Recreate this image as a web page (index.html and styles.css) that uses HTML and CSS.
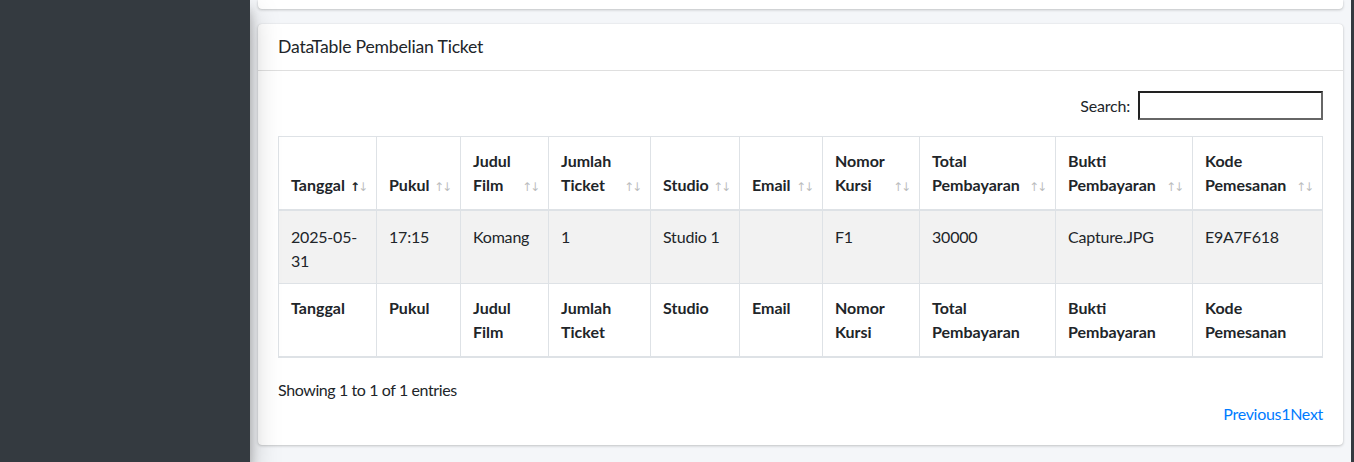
FILE: index.html
```html
<!DOCTYPE html>
<html lang="id">
<head>
<meta charset="utf-8">
<title>DataTable Pembelian Ticket</title>
<link rel="stylesheet" href="styles.css">
</head>
<body>
<div class="layout">
  <aside class="sidebar"></aside>
  <main class="content">
    <div class="card card-prev"></div>
    <div class="card">
      <div class="card-header"><h3 class="card-title">DataTable Pembelian Ticket</h3></div>
      <div class="card-body">
        <div class="dt-top">
          <label class="dt-search">Search:<input type="search" class="dt-input"></label>
        </div>
        <table class="table">
          <colgroup>
            <col class="w1"><col class="w2"><col class="w3"><col class="w4"><col class="w5">
            <col class="w6"><col class="w7"><col class="w8"><col class="w9"><col class="w10">
          </colgroup>
          <thead>
            <tr>
              <th class="sort asc">Tanggal</th>
              <th class="sort">Pukul</th>
              <th class="sort">Judul Film</th>
              <th class="sort">Jumlah Ticket</th>
              <th class="sort">Studio</th>
              <th class="sort">Email</th>
              <th class="sort">Nomor Kursi</th>
              <th class="sort">Total Pembayaran</th>
              <th class="sort">Bukti Pembayaran</th>
              <th class="sort">Kode Pemesanan</th>
            </tr>
          </thead>
          <tbody>
            <tr class="odd">
              <td>2025-05-31</td>
              <td>17:15</td>
              <td>Komang</td>
              <td>1</td>
              <td>Studio 1</td>
              <td></td>
              <td>F1</td>
              <td>30000</td>
              <td>Capture.JPG</td>
              <td>E9A7F618</td>
            </tr>
          </tbody>
          <tfoot>
            <tr>
              <th>Tanggal</th>
              <th>Pukul</th>
              <th>Judul Film</th>
              <th>Jumlah Ticket</th>
              <th>Studio</th>
              <th>Email</th>
              <th>Nomor Kursi</th>
              <th>Total Pembayaran</th>
              <th>Bukti Pembayaran</th>
              <th>Kode Pemesanan</th>
            </tr>
          </tfoot>
        </table>
        <div class="dt-info">Showing 1 to 1 of 1 entries</div>
        <div class="dt-paging"><a href="#" class="pg">Previous</a><a href="#" class="pg">1</a><a href="#" class="pg">Next</a></div>
      </div>
    </div>
  </main>
  <div class="edge"></div>
</div>
</body>
</html>
```
FILE: styles.css
```css
* { box-sizing: border-box; }
html, body { margin: 0; padding: 0; height: 100%; }
body {
  font-family: Lato, "Open Sans", sans-serif;
  font-size: 16px;
  line-height: 24px;
  color: #212529;
  background: #f4f6f9;
  overflow: hidden;
}
.layout { display: flex; height: 462px; }
.sidebar {
  width: 250px;
  flex: 0 0 250px;
  background: #343a40;
  box-shadow: 0 14px 28px rgba(0,0,0,.25), 0 10px 10px rgba(0,0,0,.22);
  position: relative;
  z-index: 2;
}
.content { flex: 1; padding: 0 8px; min-width: 0; }
.edge { flex: 0 0 3px; background: #343a40; }
.card {
  background: #fff;
  border-radius: 4px;
  box-shadow: 0 0 1px rgba(0,0,0,.125), 0 1px 3px rgba(0,0,0,.2);
}
.card-prev { height: 9px; margin-bottom: 15px; border-top-left-radius: 0; border-top-right-radius: 0; }
.card-header {
  padding: 12px 20px;
  border-bottom: 1px solid rgba(0,0,0,.125);
}
.card-title { margin: 0; font-size: 17.6px; font-weight: 400; line-height: 22px; letter-spacing: -0.2px; }
.card-body { padding: 20px 20px 19px; }
.dt-top { display: flex; justify-content: flex-end; align-items: center; height: 29px; margin-bottom: 16px; }
.dt-search { display: flex; align-items: center; font-size: 16px; letter-spacing: -0.2px; }
.dt-input {
  margin-left: 8px;
  width: 185px;
  height: 29px;
  border: 2px solid #222;
  border-right-color: #666;
  border-bottom-color: #666;
  padding: 1px 4px;
  font: inherit;
  background: #fff;
}
.table { width: 100%; border-collapse: collapse; table-layout: fixed; }
.w1 { width: 98px; } .w2 { width: 84px; } .w3 { width: 88px; } .w4 { width: 102px; }
.w5 { width: 89px; } .w6 { width: 83px; } .w7 { width: 97px; } .w8 { width: 136px; }
.w9 { width: 137px; } .w10 { width: 130px; }
.table th, .table td {
  border: 1px solid #dee2e6;
  padding: 12px;
  text-align: left;
  vertical-align: top;
}
.table td { padding: 14px 12px 10px; letter-spacing: -0.2px; }
.table th { font-weight: 700; }
.table thead th {
  vertical-align: bottom;
  border-bottom: 2px solid #dee2e6;
  padding-right: 30px;
  position: relative;
}
.table tbody .odd td { background: rgba(0,0,0,.05); }
.table tfoot th { border-bottom: 2px solid #dee2e6; }
.sort::before, .sort::after {
  position: absolute;
  bottom: 14px;
  font-family: "DejaVu Sans", sans-serif;
  font-size: 12px;
  font-weight: 400;
  line-height: 16px;
  opacity: .3;
}
.sort::before { content: "\2191"; right: 16px; }
.sort::after { content: "\2193"; right: 8px; }
.sort.asc::before { opacity: 1; font-weight: 700; }
.dt-info { margin-top: 20px; letter-spacing: -0.4px; }
.dt-paging { text-align: right; letter-spacing: -0.3px; }
.pg { color: #007bff; text-decoration: none; }
```
